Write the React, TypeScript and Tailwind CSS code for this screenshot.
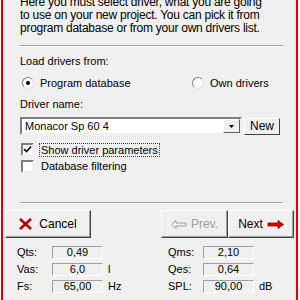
import React from "react";

function Field({ value }: { value: string }) {
  return (
    <div className="w-[51px] h-[13px] border border-t-[#a0a0a0] border-l-[#a0a0a0] border-b-white border-r-white bg-[#f0f0f0] flex items-center justify-center leading-none">
      {value}
    </div>
  );
}

function ParamRow({ label, value, unit }: { label: string; value: string; unit?: string }) {
  return (
    <div className="flex items-center h-[17px]">
      <span className="w-[35px]">{label}</span>
      <Field value={value} />
      <span className="ml-[5px]">{unit}</span>
    </div>
  );
}

function Radio({ checked }: { checked?: boolean }) {
  return (
    <span className="w-[12px] h-[12px] rounded-full bg-white border border-t-[#808080] border-l-[#808080] border-b-[#e0e0e0] border-r-[#e0e0e0] flex items-center justify-center">
      {checked && <span className="w-[4px] h-[4px] rounded-full bg-black" />}
    </span>
  );
}

function Check({ checked }: { checked?: boolean }) {
  return (
    <span className="w-[13px] h-[13px] bg-white border-2 border-t-[#808080] border-l-[#808080] border-b-[#f0f0f0] border-r-[#f0f0f0] flex items-center justify-center">
      {checked && (
        <svg width="9" height="9" viewBox="0 0 9 9">
          <path d="M1 4 L3.5 6.5 L8 1.5" stroke="black" strokeWidth="1.6" fill="none" />
        </svg>
      )}
    </span>
  );
}

const btn =
  "h-[28px] flex items-center justify-center gap-[4px] bg-[#f0f0f0] border border-t-white border-l-white border-b-[#404040] border-r-[#404040] shadow-[inset_-1px_-1px_0_#a0a0a0]";

export default function App() {
  return (
    <div className="w-[300px] h-[300px] overflow-hidden flex bg-white text-[11px] text-black font-['Liberation_Sans',Arial,sans-serif] whitespace-nowrap">
      <div className="w-[1px] bg-[#f4f4f4]" />
      <div className="w-[2px] bg-[#e00000]" />
      <div className="w-[293px] bg-[#f0f0f0] flex flex-col">
        <div className="pl-[17px] pr-[13px]">
          <p className="leading-[13px] mt-[-4px] text-[12px] tracking-[-0.25px]">
            Here you must select driver, what you are going
            <br />
            to use on your new project. You can pick it from
            <br />
            program database or from your own drivers list.
          </p>
          <div className="mt-[10px] h-[2px] border-t border-[#a0a0a0] border-b border-b-white" />
          <div className="mt-[8px] leading-[13px]">Load drivers from:</div>
          <div className="mt-[7px] flex items-center h-[16px]">
            <div className="w-[172px] flex items-center pl-[2px]">
              <Radio checked />
              <span className="ml-[6px]">Program database</span>
            </div>
            <Radio />
            <span className="ml-[6px]">Own drivers</span>
          </div>
          <div className="mt-[7px] leading-[13px]">Driver name:</div>
          <div className="mt-[6px] flex items-center">
            <div className="w-[222px] h-[18px] bg-white border-2 border-t-[#808080] border-l-[#808080] border-b-[#f0f0f0] border-r-[#f0f0f0] flex items-center">
              <span className="pl-[3px] flex-1">Monacor Sp 60 4</span>
              <span className="w-[17px] h-[14px] bg-[#f0f0f0] border border-t-white border-l-white border-b-[#606060] border-r-[#606060] flex items-center justify-center">
                <svg width="5" height="3" viewBox="0 0 5 3"><path d="M0 0 H5 L2.5 3 Z" fill="black" /></svg>
              </span>
            </div>
            <div className="ml-[2px] w-[36px] h-[17px] flex items-center justify-center bg-[#f0f0f0] border border-t-white border-l-white border-b-[#404040] border-r-[#404040] text-[12px]">
              New
            </div>
          </div>
          <div className="mt-[7px] flex items-center h-[15px] ml-[1px]">
            <Check checked />
            <span className="ml-[6px] outline outline-1 outline-dotted outline-[#404040] leading-[12px] px-[1px]">Show driver parameters</span>
          </div>
          <div className="mt-[2px] flex items-center h-[15px] ml-[1px]">
            <Check />
            <span className="ml-[7px]">Database filtering</span>
          </div>
        </div>
        <div className="mt-[28px] ml-[17px] mr-[13px] h-[2px] border-t border-[#a0a0a0] border-b border-b-white" />
        <div className="mt-[6px] flex pl-[2px] pr-[2px]">
          <div className={btn + " w-[86px] gap-[7px]"}>
            <svg width="13" height="12" viewBox="0 0 13 12">
              <path d="M1 1 L12 11 M12 1 L1 11" stroke="#b00000" strokeWidth="2.6" />
            </svg>
            <span className="text-[12px]">Cancel</span>
          </div>
          <div className="flex-1" />
          <div className={btn + " w-[67px] text-[#a0a0a0]"}>
            <svg width="16" height="9" viewBox="0 0 16 9">
              <path d="M0.5 4.5 L5 0.5 V3 H15 V6 H5 V8.5 Z" fill="none" stroke="#a0a0a0" />
            </svg>
            <span className="text-[12px]">Prev.</span>
          </div>
          <div className={btn + " w-[66px]"}>
            <span className="text-[12px]">Next</span>
            <svg width="17" height="9" viewBox="0 0 17 9">
              <path d="M16.5 4.5 L11 0.5 V3 H1 V6 H11 V8.5 Z" fill="#e00000" stroke="#700000" strokeWidth="0.8" />
            </svg>
          </div>
        </div>
        <div className="mt-[6px] flex pl-[14px]">
          <div className="flex flex-col w-[151px]">
            <ParamRow label="Qts:" value="0,49" />
            <ParamRow label="Vas:" value="6,0" unit="l" />
            <ParamRow label="Fs:" value="65,00" unit="Hz" />
          </div>
          <div className="flex flex-col">
            <ParamRow label="Qms:" value="2,10" />
            <ParamRow label="Qes:" value="0,64" />
            <ParamRow label="SPL:" value="90,00" unit="dB" />
          </div>
        </div>
      </div>
      <div className="w-[2px] bg-[#e00000]" />
    </div>
  );
}
